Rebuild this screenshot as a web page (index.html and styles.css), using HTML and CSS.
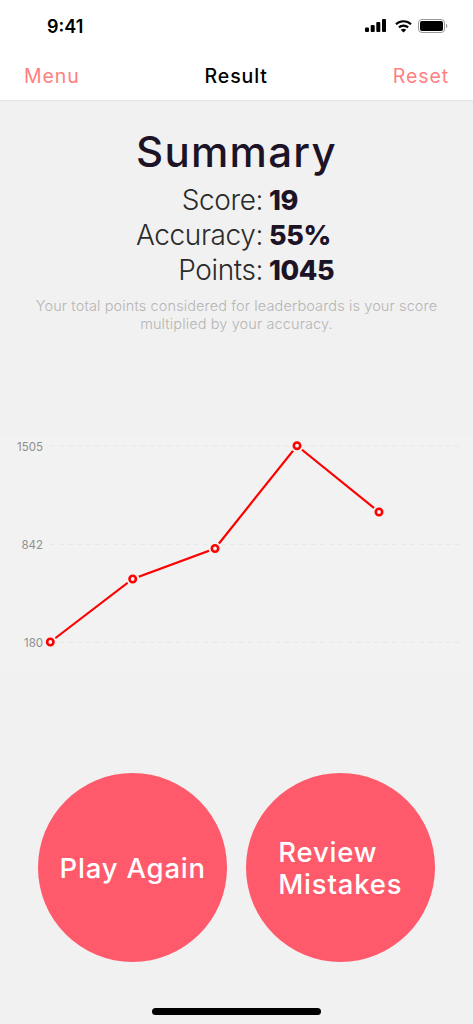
FILE: index.html
```html
<!DOCTYPE html>
<html lang="en">
<head>
    <meta charset="UTF-8">
    <meta name="viewport" content="width=device-width, initial-scale=1.0">
    <title>Result</title>
    <link rel="stylesheet" href="styles.css">
</head>
<body>
    <div class="header">
        <div class="status-bar">
            <span class="time">9:41</span>
            <div class="status-icons">
                <svg class="signal" width="21" height="13" viewBox="0 0 21 13">
                    <rect x="0" y="8.500" width="4" height="4.500" rx="1"/>
                    <rect x="5.700" y="6" width="4" height="7" rx="1"/>
                    <rect x="11.300" y="3" width="4" height="10" rx="1"/>
                    <rect x="17" y="0" width="4" height="13" rx="1"/>
                </svg>
                <svg class="wifi" width="17" height="14" viewBox="0 0 17 14">
                    <path d="M1 5.200A11 11 0 0 1 16 5.200" fill="none" stroke="#000" stroke-width="2.200"/>
                    <path d="M3.900 8.400A6.700 6.700 0 0 1 13.100 8.400" fill="none" stroke="#000" stroke-width="2.200"/>
                    <path d="M8.500 13.600L11.200 10.800C9.700 9.400 7.300 9.400 5.800 10.800z"/>
                </svg>
                <svg width="30" height="14" viewBox="0 0 30 14">
                    <rect x=".5" y=".5" width="26" height="13" rx="3.500" fill="none" stroke="#999"/>
                    <rect x="2" y="2" width="23" height="10" rx="2"/>
                    <path d="M28 4.800c.8.300 1.300 1.200 1.300 2.200s-.5 1.900-1.300 2.200z" fill="#999"/>
                </svg>
            </div>
        </div>
        <div class="nav-bar">
            <span class="nav-link">Menu</span>
            <span class="nav-title">Result</span>
            <span class="nav-link">Reset</span>
        </div>
    </div>

    <div class="summary">
        <h1>Summary</h1>
        <div class="stats">
            <span class="stat-label">Score:</span><span class="stat-value">19</span>
            <span class="stat-label">Accuracy:</span><span class="stat-value">55%</span>
            <span class="stat-label">Points:</span><span class="stat-value">1045</span>
        </div>
        <p class="note">Your total points considered for leaderboards is your score multiplied by your accuracy.</p>
    </div>

    <svg class="chart" width="473" height="235" viewBox="0 0 473 235">
        <g class="grid-lines">
            <line x1="50" y1="11" x2="459" y2="11"/>
            <line x1="50" y1="109.500" x2="459" y2="109.500"/>
            <line x1="50" y1="207.500" x2="459" y2="207.500"/>
        </g>
        <g class="axis-labels">
            <text x="43" y="15.500">1505</text>
            <text x="43" y="114">842</text>
            <text x="43" y="212">180</text>
        </g>
        <polyline class="trend" points="50.300,207 132.700,144 215,113.500 297,10.700 379,77"/>
        <g class="halos">
            <circle cx="50.300" cy="207" r="6.500"/>
            <circle cx="132.700" cy="144" r="6.500"/>
            <circle cx="215" cy="113.500" r="6.500"/>
            <circle cx="297" cy="10.700" r="6.500"/>
            <circle cx="379" cy="77" r="6.500"/>
        </g>
        <g class="dots">
            <circle cx="50.300" cy="207" r="3.200"/>
            <circle cx="132.700" cy="144" r="3.200"/>
            <circle cx="215" cy="113.500" r="3.200"/>
            <circle cx="297" cy="10.700" r="3.200"/>
            <circle cx="379" cy="77" r="3.200"/>
        </g>
    </svg>

    <div class="actions">
        <div class="round-button">Play Again</div>
        <div class="round-button">Review<br>Mistakes</div>
    </div>

    <div class="home-indicator"></div>
</body>
</html>
```

FILE: styles.css
```css
body {
    margin: 0;
    width: 473px;
    height: 1024px;
    overflow: hidden;
    background-color: #f1f1f1;
    font-family: Inter, "Liberation Sans", sans-serif;
}
.header {
    height: 100px;
    background-color: #fff;
    border-bottom: 1px solid #e3e3e3;
}
.status-bar {
    height: 52px;
    padding: 0 25px 0 47px;
    display: flex;
    align-items: center;
    justify-content: space-between;
}
.time {
    font-size: 18px;
    font-weight: 600;
    color: #000;
}
.status-icons {
    display: flex;
    align-items: center;
    gap: 6px;
    margin-top: -1px;
}
.signal {
    margin-right: 3px;
}
.nav-bar {
    height: 48px;
    padding: 0 24px;
    display: flex;
    align-items: center;
    justify-content: space-between;
    font-size: 19.500px;
    letter-spacing: 0.9px;
}
.nav-link {
    color: #ff7f7f;
}
.nav-title {
    color: #000;
    font-weight: 500;
}
.summary {
    text-align: center;
    height: 334px;
}
h1 {
    margin: 0;
    padding-top: 26px;
    font-size: 42px;
    line-height: 50px;
    font-weight: 500;
    letter-spacing: 1.300px;
    color: #1c1326;
}
.stats {
    display: grid;
    grid-template-columns: 263px 1fr;
    column-gap: 6px;
    margin-top: 6px;
    font-size: 28px;
    line-height: 35px;
}
.stat-label {
    text-align: right;
    font-weight: 300;
    letter-spacing: -0.4px;
    color: #2b2b2b;
}
.stat-value {
    text-align: left;
    font-size: 27px;
    font-weight: 800;
    letter-spacing: -0.4px;
    color: #1c1326;
}
.note {
    margin: 9px 30px 0;
    font-size: 14.500px;
    line-height: 17.500px;
    font-weight: 300;
    letter-spacing: 0.12px;
    color: #b5b5b5;
}
.chart {
    display: block;
    background-color: #f2f2f2;
}
.grid-lines line {
    stroke: #e8e8e8;
    stroke-width: 1;
    stroke-dasharray: 5 4;
}
.axis-labels text {
    font-size: 11.500px;
    fill: #8f8f8f;
    text-anchor: end;
}
.trend {
    fill: none;
    stroke: #ff0000;
    stroke-width: 2.200;
}
.halos circle {
    fill: #f2f2f2;
}
.dots circle {
    fill: #f2f2f2;
    stroke: #ff0000;
    stroke-width: 2.600;
}
.actions {
    margin-top: 103px;
    display: flex;
    justify-content: center;
    gap: 18.500px;
}
.round-button {
    width: 189px;
    height: 189px;
    border-radius: 50%;
    background-color: #ff5a6b;
    color: #fff;
    font-size: 27.500px;
    font-weight: 500;
    line-height: 32px;
    letter-spacing: 0.8px;
    display: flex;
    align-items: center;
    justify-content: center;
}
.home-indicator {
    width: 169px;
    height: 6.500px;
    margin: 46px auto 0;
    border-radius: 4px;
    background-color: #000;
}
```
